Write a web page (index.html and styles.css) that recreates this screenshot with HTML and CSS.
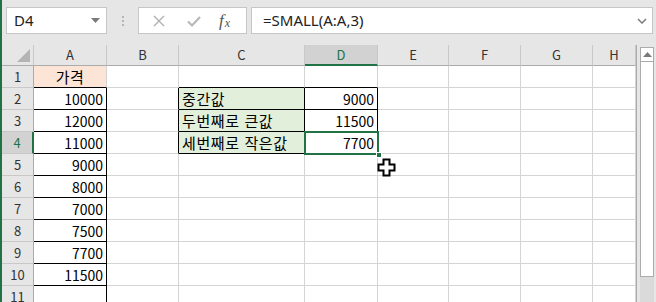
FILE: index.html
```html
<!DOCTYPE html>
<html lang="ko">
<head>
<meta charset="utf-8">
<link rel="stylesheet" href="styles.css">
</head>
<body>
<div class="app">
  <div class="toolbar">
    <div class="namebox">
      <span class="nb-text">D4</span>
      <svg class="nb-arrow" width="9" height="5" viewBox="0 0 9 5"><path d="M0 0H9L4.5 5Z" fill="#7a7a7a"/></svg>
    </div>
    <div class="grip"><i></i><i></i><i></i></div>
    <div class="fbuttons">
      <svg class="fb-icon" width="14" height="14" viewBox="0 0 14 14"><path d="M2 2L12 12M12 2L2 12" stroke="#b0b0b0" stroke-width="1.4" fill="none"/></svg>
      <svg class="fb-icon" width="16" height="14" viewBox="0 0 16 14"><path d="M2 7.5L6 11.5L14 3" stroke="#b8b8b8" stroke-width="2.2" fill="none"/></svg>
      <span class="fx"><i>f</i><sub>x</sub></span>
    </div>
    <div class="formula">
      <span class="f-text">=SMALL(A:A,3)</span>
      <svg class="f-chev" width="10" height="6" viewBox="0 0 10 6"><path d="M1 1L5 5L9 1" stroke="#808080" stroke-width="1.6" fill="none"/></svg>
    </div>
  </div>
  <div class="sheet">
    <div class="grid">
      <div class="corner"><span class="tri"></span></div>
      <div class="ch">A</div><div class="ch">B</div><div class="ch">C</div><div class="ch sel">D</div><div class="ch">E</div><div class="ch">F</div><div class="ch">G</div><div class="ch">H</div>

      <div class="rh">1</div>
      <div class="c peach bb ctr">가격</div><div class="c"></div><div class="c bb"></div><div class="c bb"></div><div class="c"></div><div class="c"></div><div class="c"></div><div class="c"></div>

      <div class="rh">2</div>
      <div class="c br bb num">10000</div><div class="c br"></div><div class="c green br bb">중간값</div><div class="c br bb num">9000</div><div class="c"></div><div class="c"></div><div class="c"></div><div class="c"></div>

      <div class="rh">3</div>
      <div class="c br bb num">12000</div><div class="c br"></div><div class="c green br bb">두번째로 큰값</div><div class="c br bb num">11500</div><div class="c"></div><div class="c"></div><div class="c"></div><div class="c"></div>

      <div class="rh sel">4</div>
      <div class="c br bb num">11000</div><div class="c br"></div><div class="c green br bb">세번째로 작은값</div><div class="c br bb num">7700</div><div class="c"></div><div class="c"></div><div class="c"></div><div class="c"></div>

      <div class="rh">5</div>
      <div class="c br bb num">9000</div><div class="c"></div><div class="c"></div><div class="c"></div><div class="c"></div><div class="c"></div><div class="c"></div><div class="c"></div>

      <div class="rh">6</div>
      <div class="c br bb num">8000</div><div class="c"></div><div class="c"></div><div class="c"></div><div class="c"></div><div class="c"></div><div class="c"></div><div class="c"></div>

      <div class="rh">7</div>
      <div class="c br bb num">7000</div><div class="c"></div><div class="c"></div><div class="c"></div><div class="c"></div><div class="c"></div><div class="c"></div><div class="c"></div>

      <div class="rh">8</div>
      <div class="c br bb num">7500</div><div class="c"></div><div class="c"></div><div class="c"></div><div class="c"></div><div class="c"></div><div class="c"></div><div class="c"></div>

      <div class="rh">9</div>
      <div class="c br bb num">7700</div><div class="c"></div><div class="c"></div><div class="c"></div><div class="c"></div><div class="c"></div><div class="c"></div><div class="c"></div>

      <div class="rh">10</div>
      <div class="c br bb num">11500</div><div class="c"></div><div class="c"></div><div class="c"></div><div class="c"></div><div class="c"></div><div class="c"></div><div class="c"></div>

      <div class="rh">11</div>
      <div class="c br"></div><div class="c"></div><div class="c"></div><div class="c"></div><div class="c"></div><div class="c"></div><div class="c"></div><div class="c"></div>

      <div class="selbox"><span class="handle"></span></div>
      <svg class="cursor" width="20" height="20" viewBox="0 0 20 20"><path d="M6.5 1.5H12.5V6.5H17.5V12.5H12.5V17.5H6.5V12.5H1.5V6.5H6.5Z" fill="#fff" stroke="#000" stroke-width="2"/></svg>
    </div>
    <div class="vscroll">
      <div class="vs-up"><svg width="9" height="5" viewBox="0 0 9 5"><path d="M0 5H9L4.5 0Z" fill="#7a7a7a"/></svg></div>
      <div class="vs-thumb"></div>
      <div class="vs-track"></div>
    </div>
  </div>
</div>
</body>
</html>
```

FILE: styles.css
```css
* { box-sizing: border-box; }
html, body { margin: 0; padding: 0; }
body {
  width: 656px;
  height: 302px;
  overflow: hidden;
  background: #e6e6e6;
  font-family: "Noto Sans CJK KR", "Noto Sans", sans-serif;
}
.app {
  height: 302px;
  border-left: 2px solid #217346;
  display: flex;
  flex-direction: column;
}
.toolbar {
  height: 45px;
  flex: none;
  display: flex;
  align-items: flex-start;
  padding: 7px 3px 0 4px;
  background: #e6e6e6;
}
.namebox {
  width: 101px;
  height: 27px;
  background: #fff;
  border: 1px solid #c6c6c6;
  display: flex;
  align-items: center;
  justify-content: space-between;
  padding: 0 6px 0 7px;
}
.nb-text {
  font-family: "Noto Sans", sans-serif;
  font-size: 15px;
  color: #222;
  line-height: 1;
}
.grip {
  width: 31px;
  height: 27px;
  display: flex;
  flex-direction: column;
  align-items: center;
  justify-content: center;
  gap: 2px;
}
.grip i {
  width: 2px;
  height: 2px;
  background: #b5b5b5;
  display: block;
}
.fbuttons {
  width: 109px;
  height: 27px;
  background: #fff;
  border: 1px solid #c6c6c6;
  display: flex;
  align-items: center;
  padding: 0 0 0 13px;
  gap: 0;
}
.fb-icon { margin-right: 20px; }
.fb-icon + .fb-icon { margin-right: 17px; }
.fx {
  font-family: "Liberation Serif", serif;
  font-size: 17px;
  color: #555;
  line-height: 1;
}
.fx i { font-style: italic; }
.fx sub { font-style: italic; font-size: 12px; vertical-align: -1px; margin-left: 1px; }
.formula {
  margin-left: 4px;
  width: 402px;
  height: 27px;
  background: #fff;
  border: 1px solid #c6c6c6;
  display: flex;
  align-items: center;
  justify-content: space-between;
  padding: 0 5px 0 11px;
}
.f-text {
  font-family: "Noto Sans", sans-serif;
  font-size: 15px;
  color: #222;
  line-height: 1;
}
.sheet {
  flex: 1;
  display: flex;
  overflow: hidden;
}
.grid {
  position: relative;
  display: grid;
  grid-template-columns: 32px 73px 72px 126px 73px 71px 72px 72px 43px;
  grid-template-rows: 21px repeat(11, 22px);
  background: #fff;
  align-content: start;
  width: 634px;
}
.corner {
  background: #e6e6e6;
  border-right: 1px solid #c8c8c8;
  border-bottom: 1px solid #ababab;
  position: relative;
}
.tri {
  position: absolute;
  right: 3px;
  bottom: 3px;
  width: 0;
  height: 0;
  border-left: 13px solid transparent;
  border-bottom: 13px solid #b4b4b4;
}
.ch {
  background: #e6e6e6;
  border-right: 1px solid #c8c8c8;
  border-bottom: 1px solid #ababab;
  font-size: 13px;
  color: #333;
  text-align: center;
  line-height: 20px;
}
.ch:last-of-type { border-right: none; }
.ch.sel {
  background: #d2d2d2;
  color: #217346;
  border-bottom: 2px solid #217346;
}
.rh {
  background: #e6e6e6;
  border-right: 1px solid #ababab;
  border-bottom: 1px solid #c8c8c8;
  font-size: 13px;
  color: #333;
  text-align: center;
  line-height: 22px;
}
.rh.sel {
  background: #d2d2d2;
  color: #217346;
  border-right: 2px solid #217346;
}
.c {
  border-right: 1px solid #d4d4d4;
  border-bottom: 1px solid #d4d4d4;
  font-size: 14px;
  color: #000;
  line-height: 22px;
  padding: 0 3px;
  white-space: nowrap;
  overflow: hidden;
}
.c.br { border-right-color: #000; }
.c.bb { border-bottom-color: #000; }
.num { text-align: right; }
.ctr { text-align: center; }
.peach { background: #fce4d6; font-size: 15px; letter-spacing: 0.5px; }
.green { background: #e2efda; font-size: 15px; letter-spacing: 0.6px; }
.selbox {
  position: absolute;
  left: 302px;
  top: 86px;
  width: 75px;
  height: 24px;
  border: 2px solid #217346;
  pointer-events: none;
}
.handle {
  position: absolute;
  right: -5px;
  bottom: -5px;
  width: 6px;
  height: 6px;
  background: #217346;
  border: 1px solid #fff;
}
.cursor {
  position: absolute;
  left: 375px;
  top: 113px;
}
.vscroll {
  width: 20px;
  background: #e6e6e6;
  border-left: 1px solid #ababab;
  display: flex;
  flex-direction: column;
  padding: 2px 2px 0 3px;
}
.vs-up {
  height: 15px;
  background: #fff;
  border: 1px solid #ababab;
  display: flex;
  align-items: center;
  justify-content: center;
}
.vs-thumb {
  height: 215px;
  background: #fff;
  border: 1px solid #ababab;
  border-top: none;
}
.vs-track {
  flex: 1;
  background: #dadada;
}
```
